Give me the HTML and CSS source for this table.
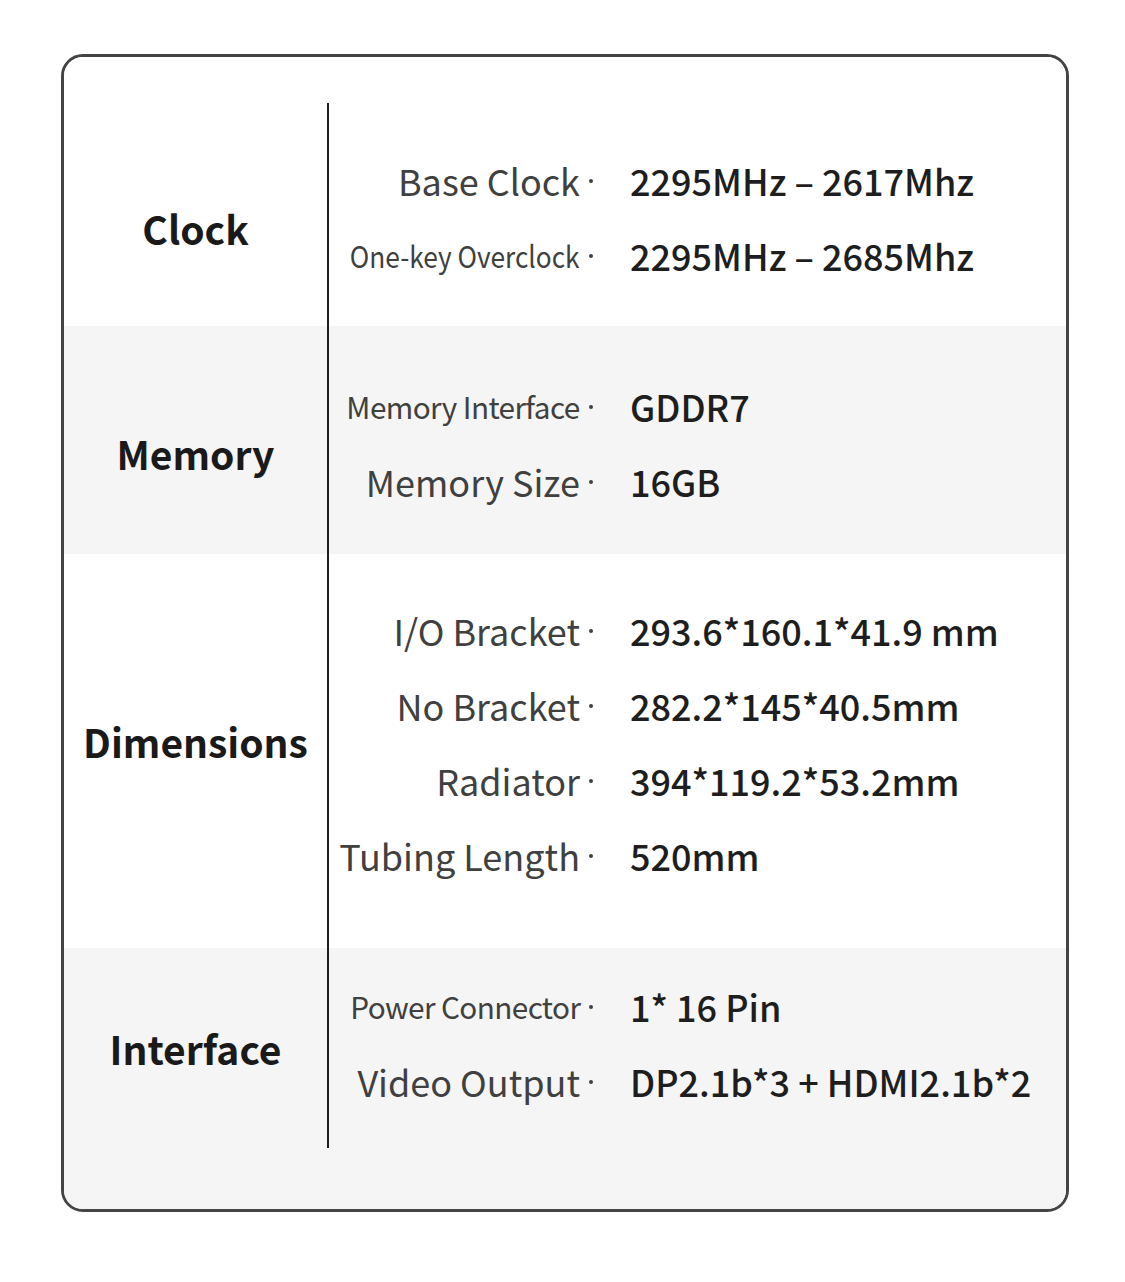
FILE: index.html
```html
<!DOCTYPE html>
<html>
<head>
<meta charset="utf-8">
<link rel="stylesheet" href="styles.css">
</head>
<body>
<div class="card">
  <div class="spacer-top"></div>

  <section class="row row-clock">
    <div class="cat">Clock</div>
    <div class="specs">
      <div class="label"><span class="txt">Base Clock</span><span class="dot"></span></div>
      <div class="value">2295MHz – 2617Mhz</div>
      <div class="label"><span class="txt narrow">One-key Overclock</span><span class="dot"></span></div>
      <div class="value">2295MHz – 2685Mhz</div>
    </div>
  </section>

  <section class="row row-memory alt">
    <div class="cat">Memory</div>
    <div class="specs">
      <div class="label"><span class="txt narrow light">Memory Interface</span><span class="dot"></span></div>
      <div class="value">GDDR7</div>
      <div class="label"><span class="txt">Memory Size</span><span class="dot"></span></div>
      <div class="value">16GB</div>
    </div>
  </section>

  <section class="row row-dims">
    <div class="cat">Dimensions</div>
    <div class="specs">
      <div class="label"><span class="txt">I/O Bracket</span><span class="dot"></span></div>
      <div class="value">293.6*160.1*41.9 mm</div>
      <div class="label"><span class="txt">No Bracket</span><span class="dot"></span></div>
      <div class="value">282.2*145*40.5mm</div>
      <div class="label"><span class="txt">Radiator</span><span class="dot"></span></div>
      <div class="value">394*119.2*53.2mm</div>
      <div class="label"><span class="txt">Tubing Length</span><span class="dot"></span></div>
      <div class="value">520mm</div>
    </div>
  </section>

  <section class="row row-iface alt">
    <div class="cat">Interface</div>
    <div class="specs">
      <div class="label"><span class="txt narrow light">Power Connector</span><span class="dot"></span></div>
      <div class="value">1* 16 Pin</div>
      <div class="label"><span class="txt">Video Output</span><span class="dot"></span></div>
      <div class="value">DP2.1b*3 + HDMI2.1b*2</div>
    </div>
  </section>

  <div class="spacer-bottom"></div>
</div>
</body>
</html>
```

FILE: styles.css
```css
* { box-sizing: border-box; }

body {
  margin: 0;
  background: #ffffff;
  font-family: "Noto Sans CJK SC", "Noto Sans", sans-serif;
}

.card {
  margin: 54px 0 0 61px;
  width: 1008px;
  height: 1158px;
  border: 3px solid #444444;
  border-radius: 22px;
  overflow: hidden;
  background: #ffffff;
  display: flex;
  flex-direction: column;
}

.spacer-top { height: 46px; background: #ffffff; }
.spacer-bottom { flex: 1; background: #f5f5f5; }

.row {
  display: grid;
  grid-template-columns: 263px 1fr;
  background: #ffffff;
}
.row.alt { background: #f5f5f5; }

.cat {
  display: flex;
  align-items: center;
  justify-content: center;
  font-weight: 700;
  font-size: 39px;
  color: #1a1a1a;
  white-space: nowrap;
}

.specs {
  border-left: 2px solid #1e1e1e;
  display: grid;
  grid-template-columns: 264px 1fr;
  grid-auto-rows: 75px;
  align-items: center;
}

.label {
  display: flex;
  justify-content: flex-end;
  align-items: center;
  font-size: 36px;
  font-weight: 400;
  color: #404040;
  white-space: nowrap;
}
.txt { display: inline-block; }
.txt.narrow {
  font-size: 30px;
  transform: scaleX(0.875);
  transform-origin: right center;
}
.txt.narrow.light {
  letter-spacing: -0.6px;
  transform: scaleX(0.99);
}
.dot {
  flex: none;
  width: 4px;
  height: 4px;
  border-radius: 50%;
  background: #404040;
  margin-left: 9px;
  margin-top: 2px;
}

.value {
  padding-left: 37px;
  font-size: 36px;
  font-weight: 500;
  color: #1e1e1e;
  white-space: nowrap;
}

.row-clock { height: 223px; }
.row-clock > * { padding: 39px 0 34px; }
.row-clock .cat { padding-top: 58px; padding-bottom: 32px; }

.row-memory { height: 228px; }
.row-memory > * { padding: 42px 0 36px; }
.row-memory .cat { padding-top: 60px; padding-bottom: 34px; }

.row-dims { height: 394px; }
.row-dims > * { padding: 38px 0 56px; }
.row-dims .cat { padding-top: 34px; padding-bottom: 54px; }

.row-iface { height: 200px; }
.row-iface > * { padding: 20px 0 30px; }
.row-iface .cat { padding-top: 29px; padding-bottom: 29px; }
```
